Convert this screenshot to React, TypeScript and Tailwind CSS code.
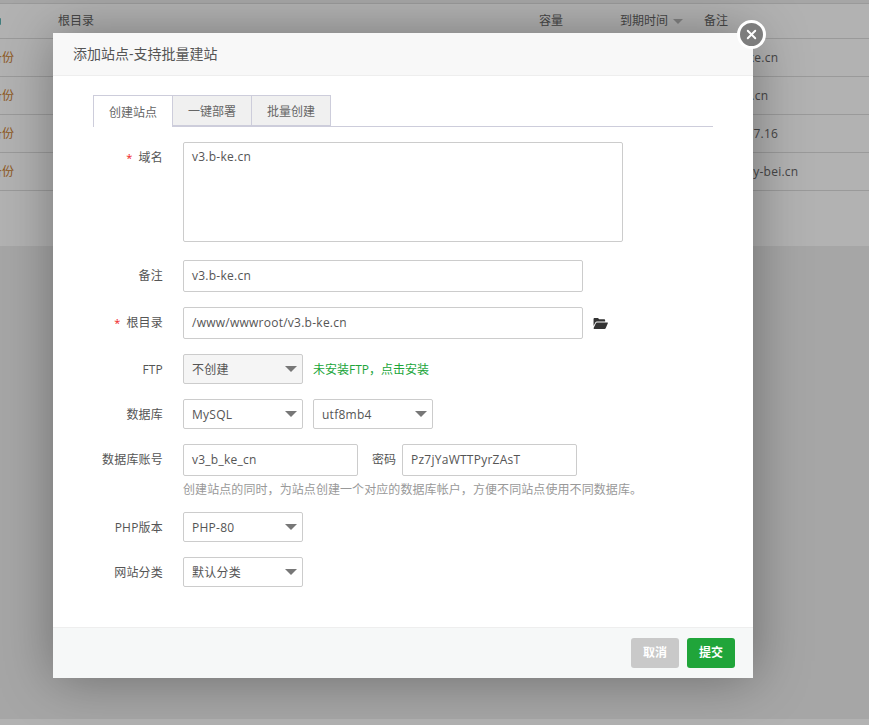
import { X } from "lucide-react";

const rows = [
  { note: "www.b-ke.cn" },
  { note: "www.bb.cn" },
  { note: "172.16.17.16" },
  { note: "www.hwy-bei.cn" },
];

function Caret() {
  return (
    <span className="ml-auto h-0 w-0 border-x-[6px] border-t-[6px] border-x-transparent border-t-[#777]" />
  );
}

function Select({ value, width, disabled }: { value: string; width: string; disabled?: boolean }) {
  return (
    <div
      className={`flex h-[30px] items-center rounded-[2px] border border-[#ccc] pl-2 pr-[5px] tracking-[0.25px] text-[#555] ${width} ${
        disabled ? "bg-[#f5f5f5]" : "bg-white"
      }`}
    >
      <span className="pt-[1px]">{value}</span>
      <Caret />
    </div>
  );
}

function Field({
  label,
  required,
  className,
  children,
}: {
  label: string;
  required?: boolean;
  className?: string;
  children: React.ReactNode;
}) {
  return (
    <div className={`flex ${className ?? ""}`}>
      <label className="h-[30px] w-[90px] shrink-0 pr-5 text-right leading-[32px] tracking-[0.2px] text-[#555]">
        {required && <span className="mr-[6px] text-[11px] text-[#ef2020]">*</span>}
        {label}
      </label>
      {children}
    </div>
  );
}

function Input({ value, width }: { value: string; width: string }) {
  return (
    <div className={`flex h-8 items-center rounded-[2px] border border-[#ccc] bg-white px-2 tracking-[0.25px] text-[#555] ${width}`}>
      {value}
    </div>
  );
}

export default function App() {
  return (
    <div className="relative h-[725px] w-[869px] overflow-hidden bg-[#eeeeee] font-['Open_Sans','Noto_Sans_CJK_SC',sans-serif] text-xs text-[#666]">
      <div className="pt-[3px]">
        <div className="h-[243px] border-t border-[#ddd] bg-white">
          <div className="flex h-[35px] items-center border-b border-[#ddd] text-[#666]">
            <span className="ml-[-2px] mr-[57px] h-[7px] w-[3px] rounded-[1px] bg-[#5fb3b3]" />
            <span className="w-[481px]">根目录</span>
            <span className="w-[81px]">容量</span>
            <span className="flex w-[84px] items-center">
              到期时间
              <span className="ml-[5px] h-0 w-0 border-x-[5px] border-t-[5px] border-x-transparent border-t-[#bbb]" />
            </span>
            <span>备注</span>
          </div>
          {rows.map((row) => (
            <div key={row.note} className="flex h-[38px] items-center border-b border-[#ddd]">
              <span className="ml-[-10px] w-[714px] pt-[1px] text-[#cb7d2c]">备份</span>
              <span className="tracking-[0.25px]">{row.note}</span>
            </div>
          ))}
        </div>
      </div>
      <div className="absolute inset-x-0 bottom-0 h-[6px] bg-white" />

      <div className="absolute inset-0 bg-black/30" />

      <div className="absolute left-[53px] top-[33px] flex h-[645px] w-[700px] flex-col bg-white shadow-[1px_1px_50px_rgba(0,0,0,0.35)]">
        <div className="flex h-[43px] shrink-0 items-center border-b border-[#eee] bg-[#f8f8f8] pl-5 text-sm text-[#555]">
          添加站点-支持批量建站
        </div>

        <div className="flex-1 px-10 pt-[19px]">
          <div className="flex h-[32px] border-b border-[#cdcddb]">
            <div className="flex h-8 w-[80px] items-center justify-center border border-b-0 border-[#cdcddb] bg-white pt-[3px] text-[#666]">
              创建站点
            </div>
            <div className="flex h-[31px] w-[79px] items-center justify-center border-y border-r border-[#cdcddb] bg-[#f0f0f0] pt-[3px] text-[#666]">
              一键部署
            </div>
            <div className="flex h-[31px] w-[79px] items-center justify-center border-y border-r border-[#cdcddb] bg-[#f0f0f0] pt-[3px] text-[#666]">
              批量创建
            </div>
          </div>

          <Field label="域名" required className="mt-[15px]">
            <div className="h-[100px] w-[440px] rounded-[2px] border border-[#ccc] bg-white px-2 pt-[6px] tracking-[0.25px] text-[#555]">
              v3.b-ke.cn
            </div>
          </Field>
          <Field label="备注" className="mt-[18px]">
            <Input value="v3.b-ke.cn" width="w-[400px]" />
          </Field>
          <Field label="根目录" required className="mt-[15px]">
            <Input value="/www/wwwroot/v3.b-ke.cn" width="w-[400px]" />
            <svg viewBox="0 0 16 14" className="ml-[9px] mt-[10px] h-[13px] w-[17px] fill-[#333]">
              <path d="M0.5 2.2C0.5 1.5 1 1 1.7 1h3.6l1.3 1.4h5.2c.7 0 1.2.5 1.2 1.2v1.2H4.2c-.8 0-1.4.4-1.8 1.1L.5 9.6z" />
              <path d="M4.1 5.9h11.2c.5 0 .8.5.6.9l-2.3 5.2c-.2.5-.7.8-1.2.8H1.2c-.5 0-.8-.5-.6-.9l2.4-5.2c.2-.5.6-.8 1.1-.8z" />
            </svg>
          </Field>
          <Field label="FTP" className="mt-[15px]">
            <Select value="不创建" width="w-[120px]" disabled />
            <span className="ml-[10px] h-[30px] leading-[32px] text-[#20a53a]">未安装FTP，点击安装</span>
          </Field>
          <Field label="数据库" className="mt-[15px]">
            <Select value="MySQL" width="w-[120px]" />
            <div className="ml-[10px]">
              <Select value="utf8mb4" width="w-[120px]" />
            </div>
          </Field>
          <Field label="数据库账号" className="mt-[15px]">
            <Input value="v3_b_ke_cn" width="w-[175px]" />
            <span className="ml-[14px] mr-[6px] leading-8 text-[#555]">密码</span>
            <Input value="Pz7jYaWTTPyrZAsT" width="w-[175px]" />
          </Field>
          <div className="ml-[90px] mt-[6px] h-4 leading-4 tracking-[0.08px] text-[#999]">
            创建站点的同时，为站点创建一个对应的数据库帐户，方便不同站点使用不同数据库。
          </div>
          <Field label="PHP版本" className="mt-[14px]">
            <Select value="PHP-80" width="w-[120px]" />
          </Field>
          <Field label="网站分类" className="mt-[15px]">
            <Select value="默认分类" width="w-[120px]" />
          </Field>
        </div>

        <div className="flex h-[51px] shrink-0 items-center justify-end gap-2 border-t border-[#eee] bg-[#f6f8f8] pr-[18px]">
          <button className="h-[30px] w-12 rounded-[3px] bg-[#c9c9c9] text-xs font-bold text-white">取消</button>
          <button className="h-[30px] w-12 rounded-[3px] bg-[#20a53a] text-xs font-bold text-white">提交</button>
        </div>

        <button className="absolute right-[-13px] top-[-13px] flex h-[29px] w-[29px] items-center justify-center rounded-full border-[3px] border-white bg-[#7d7d7d] text-white">
          <X size={15} strokeWidth={3} />
        </button>
      </div>
    </div>
  );
}
